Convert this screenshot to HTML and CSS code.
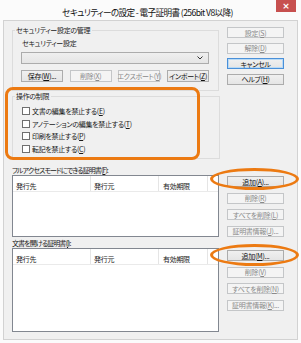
FILE: index.html
```html
<!DOCTYPE html>
<html lang="ja">
<head>
    <meta charset="UTF-8">
    <meta name="viewport" content="width=device-width, initial-scale=1.0">
    <title>セキュリティーの設定</title>
    <link rel="stylesheet" href="styles.css">
</head>
<body>
    <div class="window">
        <div class="titlebar">
            <span class="title">セキュリティーの設定 - 電子証明書 (256bit V8以降)</span>
            <span class="close">×</span>
        </div>
        <div class="client">
            <div class="row">
                <div class="group group-manage">
                    <div class="group-title">セキュリティー設定の管理</div>
                    <div class="field-label">セキュリティー設定</div>
                    <div class="combo">
                        <svg width="6" height="4" viewBox="0 0 6 4"><polyline points="0.5,0.5 3,3 5.5,0.5" fill="none" stroke="#333" stroke-width="1"/></svg>
                    </div>
                    <div class="btn-row">
                        <span class="btn">保存(<u>W</u>)...</span>
                        <span class="btn disabled">削除(<u>X</u>)</span>
                        <span class="btn disabled">エクスポート(<u>Y</u>)</span>
                        <span class="btn">インポート(<u>Z</u>)</span>
                    </div>
                </div>
                <div class="side side-top">
                    <span class="btn disabled">設定(<u>S</u>)</span>
                    <span class="btn disabled">解除(<u>D</u>)</span>
                    <span class="btn focus">キャンセル</span>
                    <span class="btn">ヘルプ(<u>H</u>)</span>
                </div>
            </div>

            <div class="group group-limit">
                <div class="group-title">操作の制限</div>
                <div class="check"><span class="box"></span>文書の編集を禁止する(<u>E</u>)</div>
                <div class="check"><span class="box"></span>アノテーションの編集を禁止する(<u>T</u>)</div>
                <div class="check"><span class="box"></span>印刷を禁止する(<u>P</u>)</div>
                <div class="check"><span class="box"></span>転記を禁止する(<u>C</u>)</div>
            </div>

            <div class="list-label first">フルアクセスモードにできる証明書(<u>F</u>):</div>
            <div class="row">
                <div class="list list-full">
                    <div class="list-head">
                        <span class="col col1">発行先</span>
                        <span class="col col2">発行元</span>
                        <span class="col col3">有効期限</span>
                    </div>
                </div>
                <div class="side side-list">
                    <span class="btn">追加(<u>A</u>)...</span>
                    <span class="btn disabled">削除(<u>R</u>)</span>
                    <span class="btn disabled">すべてを削除(<u>L</u>)</span>
                    <span class="btn disabled">証明書情報(<u>J</u>)...</span>
                </div>
            </div>

            <div class="list-label">文書を開ける証明書(<u>I</u>):</div>
            <div class="row">
                <div class="list list-open">
                    <div class="list-head">
                        <span class="col col1">発行先</span>
                        <span class="col col2">発行元</span>
                        <span class="col col3">有効期限</span>
                    </div>
                </div>
                <div class="side side-list second">
                    <span class="btn">追加(<u>M</u>)...</span>
                    <span class="btn disabled">削除(<u>V</u>)</span>
                    <span class="btn disabled">すべてを削除(<u>N</u>)</span>
                    <span class="btn disabled">証明書情報(<u>K</u>)...</span>
                </div>
            </div>
        </div>

        <!-- 強調表示 -->
        <div class="mark mark-rect"></div>
        <div class="mark mark-oval oval-a"></div>
        <div class="mark mark-oval oval-m"></div>
    </div>
</body>
</html>
```

FILE: styles.css
```css
body {
    margin: 0;
    padding: 0;
    background: #fbfbfb;
    font-family: "Noto Sans CJK JP", "Noto Sans", sans-serif;
    font-feature-settings: "palt";
    color: #1a1a1a;
}
u {
    text-decoration-thickness: 1px;
    text-underline-offset: 1px;
}
.window {
    position: relative;
    width: 301px;
    height: 343px;
    overflow: hidden;
}
.titlebar {
    position: relative;
    height: 20px;
    display: flex;
    justify-content: center;
    padding-right: 6px;
}
.title {
    font-size: 8.6px;
    letter-spacing: -0.6px;
    line-height: 24px;
    color: #111;
    white-space: nowrap;
}
.close {
    position: absolute;
    top: 0;
    left: 276px;
    width: 20px;
    height: 12px;
    background: #c7504f;
    color: #fff;
    font-family: "DejaVu Sans", sans-serif;
    font-size: 9px;
    line-height: 12px;
    text-align: center;
    font-weight: bold;
}
.client {
    margin: 0 3px;
    height: 318px;
    background: #f0f0f0;
    border: 1px solid #d2d2d2;
    padding-left: 8px;
    font-size: 7px;
    letter-spacing: -0.3px;
    line-height: 10px;
}
.row {
    display: flex;
    align-items: flex-start;
    gap: 8px;
}
.group {
    width: 188px;
    border: 1px solid #dcdcdc;
    box-sizing: content-box;
}
.group-title {
    width: fit-content;
    height: 10px;
    margin: -6px 0 0 -6px;
    padding: 0 2px 0 1px;
    background: #f0f0f0;
}
.group-manage {
    margin-top: 9px;
    padding: 0 9px 8px 8px;
}
.field-label {
    margin-top: 3px;
    margin-left: 1px;
}
.combo {
    margin-top: 4px;
    height: 10px;
    border: 1px solid #acacac;
    background: linear-gradient(#efefef, #e5e5e5);
    display: flex;
    align-items: center;
    justify-content: flex-end;
    padding-right: 5px;
}
.btn-row {
    display: flex;
    justify-content: space-between;
    margin-top: 6px;
}
.btn-row .btn {
    width: 42px;
    height: 12px;
}
.btn {
    display: flex;
    align-items: center;
    justify-content: center;
    box-sizing: border-box;
    height: 11px;
    border: 1px solid #acacac;
    background: linear-gradient(#f0f0f0, #e5e5e5);
    color: #111;
    white-space: nowrap;
}
.btn.disabled {
    background: #f4f4f4;
    border-color: #c4c6c8;
    color: #8a8a8a;
}
.btn.focus {
    border-color: #4a90d9;
    box-shadow: inset 0 0 0 1px #b9daf5;
}
.side {
    width: 57px;
    display: flex;
    flex-direction: column;
}
.side-top {
    margin-top: 6px;
    gap: 4.5px;
}
.side-list {
    margin-top: 1px;
    gap: 5.5px;
}
.side-list.second {
    margin-top: 2px;
}
.group-limit {
    width: 197px;
    margin-top: 5px;
    padding: 0 0 3px 9px;
}
.group-limit .group-title {
    margin-left: -7px;
}
.check {
    display: flex;
    align-items: center;
    height: 12.5px;
}
.group-limit .group-title + .check {
    margin-top: 4px;
}
.box {
    width: 8px;
    height: 8px;
    box-sizing: border-box;
    border: 1px solid #6f6f6f;
    background: #fff;
    margin-right: 2px;
}
.list-label {
    margin-top: 1px;
    letter-spacing: -0.9px;
}
.list-label.first {
    margin-top: 6px;
}
.list {
    width: 205px;
    border: 1px solid #828790;
    background: #fff;
}
.list-full {
    height: 60px;
}
.list-open {
    height: 82px;
}
.list-head {
    display: flex;
    border-bottom: 1px solid #eaeaea;
}
.col {
    box-sizing: border-box;
    padding-top: 5px;
    border-right: 1px solid #e5e5e5;
    padding-left: 3px;
}
.col1 {
    width: 78px;
}
.col2 {
    width: 68px;
}
.col3 {
    width: 49px;
    padding-left: 4px;
}
.mark {
    position: absolute;
    border: 3.5px solid #ec7a12;
    box-sizing: border-box;
}
.mark-rect {
    left: 5px;
    top: 87px;
    width: 195px;
    height: 73px;
    border-radius: 8px;
}
.mark-oval {
    left: 210px;
    width: 89px;
    height: 22px;
    border-radius: 50%;
}
.oval-a {
    top: 168px;
}
.oval-m {
    top: 244px;
}
```
